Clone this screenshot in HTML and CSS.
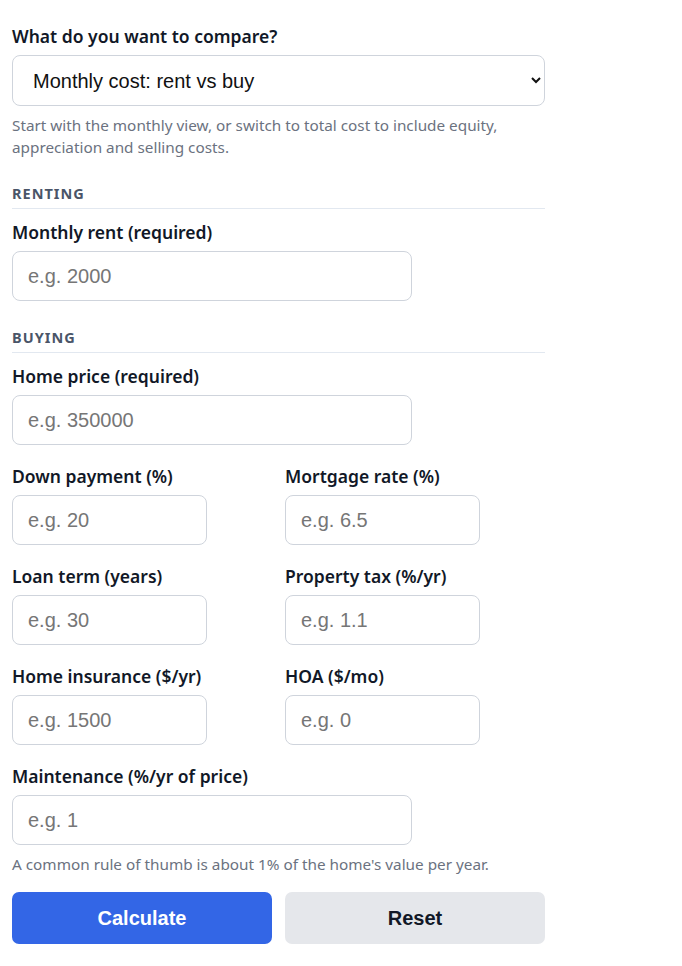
FILE: index.html
```html
<!DOCTYPE html>
<html lang="en">
<head>
    <meta charset="UTF-8">
    <meta name="viewport" content="width=device-width, initial-scale=1.0">
    <title>Rent vs Buy</title>
    <link rel="stylesheet" href="styles.css">
</head>
<body>
    <form class="calc" onsubmit="return false">
        <div class="field field-intro">
            <label for="mode">What do you want to compare?</label>
            <select id="mode">
                <option value="monthly">Monthly cost: rent vs buy</option>
                <option value="total">Total cost over time</option>
            </select>
            <p class="hint">Start with the monthly view, or switch to total cost to include equity, appreciation and selling costs.</p>
        </div>

        <h2 class="section-title">Renting</h2>
        <div class="field">
            <label for="rent">Monthly rent (required)</label>
            <input type="text" id="rent" placeholder="e.g. 2000">
        </div>

        <h2 class="section-title">Buying</h2>
        <div class="field">
            <label for="price">Home price (required)</label>
            <input type="text" id="price" placeholder="e.g. 350000">
        </div>

        <div class="grid">
            <div class="field">
                <label for="down">Down payment (%)</label>
                <input type="text" id="down" placeholder="e.g. 20">
            </div>
            <div class="field">
                <label for="rate">Mortgage rate (%)</label>
                <input type="text" id="rate" placeholder="e.g. 6.5">
            </div>
            <div class="field">
                <label for="term">Loan term (years)</label>
                <input type="text" id="term" placeholder="e.g. 30">
            </div>
            <div class="field">
                <label for="tax">Property tax (%/yr)</label>
                <input type="text" id="tax" placeholder="e.g. 1.1">
            </div>
            <div class="field">
                <label for="ins">Home insurance ($/yr)</label>
                <input type="text" id="ins" placeholder="e.g. 1500">
            </div>
            <div class="field">
                <label for="hoa">HOA ($/mo)</label>
                <input type="text" id="hoa" placeholder="e.g. 0">
            </div>
        </div>

        <div class="field field-last">
            <label for="maint">Maintenance (%/yr of price)</label>
            <input type="text" id="maint" placeholder="e.g. 1">
            <p class="hint">A common rule of thumb is about 1% of the home's value per year.</p>
        </div>

        <div class="actions">
            <button type="submit" class="btn btn-primary">Calculate</button>
            <button type="reset" class="btn btn-secondary">Reset</button>
        </div>
    </form>
</body>
</html>
```

FILE: styles.css
```css
body {
    font-family: "Noto Sans", "Open Sans", sans-serif;
    margin: 0;
    padding: 25px 12px 12px;
    background: #fff;
    color: #111827;
}
.calc {
    width: 533px;
}
.field {
    margin-bottom: 20px;
}
.field-intro {
    margin-bottom: 19px;
}
.field-last {
    margin-bottom: 17px;
}
.field label {
    display: block;
    font-size: 17.5px;
    font-weight: 600;
    line-height: 22px;
    margin-bottom: 8px;
}
select,
input {
    display: block;
    box-sizing: border-box;
    font-family: "Liberation Sans", Arial, sans-serif;
    font-size: 20px;
    border: 1px solid #cfd4dc;
    border-radius: 8px;
    background: #fff;
    color: #111;
}
select {
    width: 100%;
    height: 51px;
    padding: 0 12px 0 16px;
}
input {
    width: 75%;
    height: 50px;
    padding: 0 15px;
}
input::placeholder {
    color: #767676;
}
.hint {
    margin: 8px 0 0;
    font-size: 15.3px;
    line-height: 22px;
    color: #6b7280;
}
.section-title {
    margin: 0 0 12px;
    padding: 7px 0 6px;
    border-bottom: 1px solid #e2e8f0;
    font-size: 14.5px;
    font-weight: 700;
    letter-spacing: 0.07em;
    text-transform: uppercase;
    color: #4a5568;
    line-height: 18px;
}
.grid {
    display: grid;
    grid-template-columns: 1fr 1fr;
    column-gap: 13px;
}
.actions {
    display: grid;
    grid-template-columns: 1fr 1fr;
    gap: 13px;
}
.btn {
    height: 52px;
    border: none;
    border-radius: 7px;
    font-family: "Liberation Sans", Arial, sans-serif;
    font-size: 20px;
    font-weight: 700;
    cursor: pointer;
}
.btn-primary {
    background: #3366e6;
    color: #fff;
}
.btn-secondary {
    background: #e5e7eb;
    color: #111827;
}
```
